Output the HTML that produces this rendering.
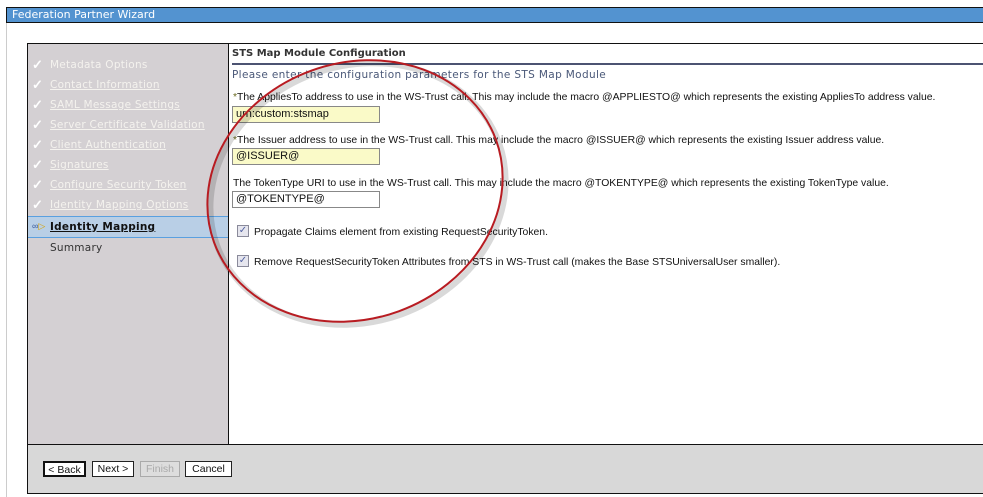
<!DOCTYPE html>
<html><head><style>
*{margin:0;padding:0;box-sizing:border-box}
body{width:983px;height:497px;background:#fff;position:relative;overflow:hidden;font-family:"Liberation Sans",Verdana,sans-serif}
.a{position:absolute}
.title{left:6px;top:7px;width:990px;height:16px;background:#5393d0;border-top:1px solid #111;border-bottom:1px solid #111;border-left:1px solid #111;color:#fff;font-family:"DejaVu Sans",sans-serif;font-size:11px;line-height:14px;padding-left:5px}
.side{left:27px;top:43px;width:202px;height:402px;background:#d4d0d3;border:1px solid #111;border-right:1px solid #111}
.main{left:228px;top:43px;width:760px;height:402px;border-top:1px solid #111}
.foot{left:27px;top:444px;width:970px;height:50px;background:#d8d8d8;border:1px solid #111;border-right:none}
.it{position:absolute;left:50px;font-family:"DejaVu Sans",sans-serif;font-size:10.5px;color:#f4f2ee;text-decoration:underline;letter-spacing:.25px}
.ck{position:absolute;left:32px;color:#fff;font-size:13px;font-weight:bold}
.lbl{position:absolute;left:233px;font-size:10.4px;color:#111;white-space:nowrap}
.inp{position:absolute;left:232px;width:148px;height:17px;border:1px solid #888;font-size:11px;line-height:15px;padding-left:3px;color:#111}
.cb{position:absolute;left:237px;width:12px;height:12px;border:1px solid #8a8a9a;background:#e6e6ee;font-size:10px;line-height:10px;color:#5060a0;text-align:center}
.btn{position:absolute;top:461px;height:16px;border:1px solid #222;background:#fff;font-size:10.5px;line-height:14px;text-align:center;color:#111}
</style></head><body>
<div class="a title">Federation Partner Wizard</div>
<div class="a" style="left:6px;top:23px;width:1px;height:474px;background:#ccc"></div>
<div class="a side"></div>
<div class="a main"></div>
<div class="a" style="left:232px;top:48px;font-family:'DejaVu Sans',sans-serif;font-size:10px;font-weight:bold;color:#333">STS Map Module Configuration</div>
<div class="a" style="left:232px;top:63px;width:751px;height:2px;background:#4c5372"></div>
<div class="a" style="left:232px;top:69px;font-family:'DejaVu Sans',sans-serif;font-size:10.5px;color:#4a5878;letter-spacing:.35px">Please enter the configuration parameters for the STS Map Module</div>

<span class="ck" style="top:57px">✓</span><span class="it" style="top:59px;text-decoration:none">Metadata Options</span>
<span class="ck" style="top:77px">✓</span><span class="it" style="top:79px">Contact Information</span>
<span class="ck" style="top:97px">✓</span><span class="it" style="top:99px">SAML Message Settings</span>
<span class="ck" style="top:117px">✓</span><span class="it" style="top:119px">Server Certificate Validation</span>
<span class="ck" style="top:137px">✓</span><span class="it" style="top:139px">Client Authentication</span>
<span class="ck" style="top:157px">✓</span><span class="it" style="top:159px">Signatures</span>
<span class="ck" style="top:177px">✓</span><span class="it" style="top:179px">Configure Security Token</span>
<span class="ck" style="top:197px">✓</span><span class="it" style="top:199px">Identity Mapping Options</span>
<div class="a" style="left:28px;top:216px;width:200px;height:22px;background:#b9cfe6;border-top:1px solid #5aa0e0;border-bottom:1px solid #5aa0e0"></div>
<span class="a" style="left:32px;top:221px;font-size:9px;color:#3a5a9a">∞<span style="color:#d8a000">▷</span></span>
<span class="it" style="top:221px;color:#111;font-weight:bold">Identity Mapping</span>
<span class="it" style="top:242px;color:#333;text-decoration:none">Summary</span>

<div class="lbl" style="top:92px"><span style="color:#6a6a20">*</span>The AppliesTo address to use in the WS-Trust call. This may include the macro @APPLIESTO@ which represents the existing AppliesTo address value.</div>
<div class="inp" style="top:106px;background:#fafac8">urn:custom:stsmap</div>
<div class="lbl" style="top:135px"><span style="color:#6a6a20">*</span>The Issuer address to use in the WS-Trust call. This may include the macro @ISSUER@ which represents the existing Issuer address value.</div>
<div class="inp" style="top:148px;background:#fafac8">@ISSUER@</div>
<div class="lbl" style="top:178px">The TokenType URI to use in the WS-Trust call. This may include the macro @TOKENTYPE@ which represents the existing TokenType value.</div>
<div class="inp" style="top:191px;background:#fff">@TOKENTYPE@</div>
<div class="cb" style="top:225px">✓</div><div class="lbl" style="left:254px;top:227px">Propagate Claims element from existing RequestSecurityToken.</div>
<div class="cb" style="top:255px">✓</div><div class="lbl" style="left:254px;top:257px">Remove RequestSecurityToken Attributes from STS in WS-Trust call (makes the Base STSUniversalUser smaller).</div>

<div class="a foot"></div>
<div class="btn" style="left:43px;width:43px;border:2px solid #111">&lt; Back</div>
<div class="btn" style="left:92px;width:42px">Next &gt;</div>
<div class="btn" style="left:140px;width:40px;border-color:#aaa;background:#ddd;color:#aaa">Finish</div>
<div class="btn" style="left:185px;width:47px">Cancel</div>

<svg class="a" style="left:0;top:0" width="983" height="497">
<ellipse cx="358" cy="194" rx="150" ry="128" transform="rotate(-20 358 194)" fill="none" stroke="rgba(0,0,0,0.15)" stroke-width="6"/>
<ellipse cx="355" cy="191" rx="150" ry="128" transform="rotate(-20 355 191)" fill="none" stroke="#b81c22" stroke-width="2"/>
</svg>
</body></html>
